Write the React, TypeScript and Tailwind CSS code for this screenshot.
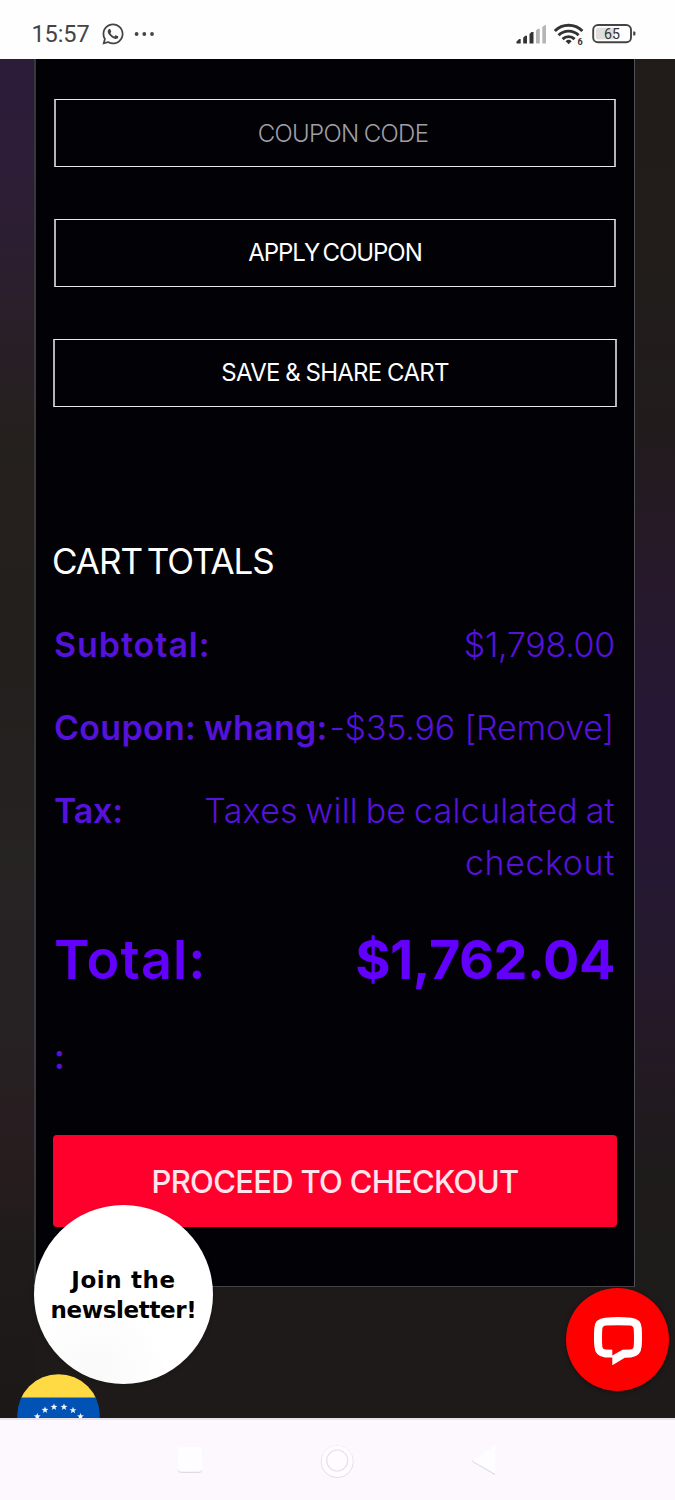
import React from "react";
import { FaWhatsapp } from "react-icons/fa";

function StatusBar() {
  return (
    <header className="flex h-[59px] items-start justify-between bg-[#fefefe] pl-[31.5px] pr-[39px] pt-[22px] text-[#444]">
      <div className="flex h-[25px] items-center">
        <span className="w-[59px] font-['Roboto',sans-serif] text-[23.5px] leading-[25px] tracking-[-0.1px]">15:57</span>
        <FaWhatsapp className="mb-[2px] ml-[10px] size-[24px]" />
        <svg className="ml-[9px] h-[5px] w-[21px]" viewBox="0 0 21 5" fill="#444">
          <circle cx="2.6" cy="2" r="1.9" />
          <circle cx="10.3" cy="2" r="1.9" />
          <circle cx="18" cy="2" r="1.9" />
        </svg>
      </div>
      <svg className="h-[25px] w-[120px]" viewBox="516 22 120 25" fill="none">
        <g fill="#333">
          <path d="M516.500 43.500v-2l2.700-2.500h1.500v4.500z" />
          <path d="M523.200 43.500v-5.700l2-2h1.800v7.700z" />
          <path d="M529.500 43.500v-9.500l2-1.900h2v11.400z" />
        </g>
        <g fill="#b5b5b5">
          <path d="M536 43.500v-13l2-1.700h1.800v14.700z" />
          <path d="M542.300 43.500v-16.300l2-2h1.700v18.300z" />
        </g>
        <g stroke="#333" strokeWidth="2.900">
          <path d="M554.800 31a19.500 19.500 0 0 1 27.600 0" />
          <path d="M558.600 35.200a14.200 14.200 0 0 1 20 0" />
          <path d="M562.600 39.100a8.500 8.500 0 0 1 12 0" />
        </g>
        <path d="M565.600 41.200a4.500 4.500 0 0 1 6 0l-3 3z" fill="#333" />
        <text x="577.500" y="45" fontSize="9" fontWeight="700" fontFamily="Roboto, sans-serif" fill="#333">6</text>
        <rect x="593.200" y="25" width="37.800" height="17.300" rx="4.800" stroke="#444" strokeWidth="1.900" />
        <rect x="596" y="27.800" width="19" height="11.700" rx="2" fill="#dedede" />
        <path d="M633.200 31.500h1.200q1 0 1 1v2q0 1-1 1h-1.200z" fill="#444" />
        <text x="612" y="39.200" textAnchor="middle" fontSize="14.200" fontFamily="Roboto, sans-serif" fill="#333">65</text>
      </svg>
    </header>
  );
}

const outline =
  "flex h-[68px] items-center justify-center border-x-2 border-y border-x-[#b4b4b6] border-y-[#e8e8ea] text-[24px] whitespace-nowrap";

function Row({ label, labelClass, children, valueClass }: { label: string; labelClass: string; children?: React.ReactNode; valueClass?: string }) {
  return (
    <div className="flex justify-between whitespace-nowrap">
      <span className={"font-semibold " + labelClass}>{label}</span>
      <span className={"text-right " + (valueClass ?? "")}>{children}</span>
    </div>
  );
}

function CartPanel() {
  return (
    <main className="ml-[34px] flex h-[1228px] w-[601px] flex-col border-b border-l-2 border-r border-b-[#424145] border-l-[#38373b] border-r-[#515055] bg-[#020106] pl-[17px] pr-[17px] pt-[40px] text-white">
      <div className="mx-px flex flex-col gap-[52px]">
        <input
          aria-label="Coupon code"
          placeholder="COUPON CODE"
          className="h-[68px] border-x-2 border-y border-x-[#b4b4b6] border-y-[#e8e8ea] bg-transparent pl-[16px] text-center text-[24px] font-light tracking-[-0.65px] [word-spacing:-1px] outline-none placeholder:text-[#a09fa5]"
        />
        <button className={outline + " tracking-[-1.05px] [word-spacing:-2.500px]"}>APPLY COUPON</button>
      </div>
      <button className={outline + " mt-[52px] tracking-[-0.72px] [word-spacing:-0.500px]"}>SAVE &amp; SHARE CART</button>

      <h2 className="-ml-px mt-[128px] text-[35px] leading-[52px] tracking-[-1.05px] [word-spacing:-4px]">CART TOTALS</h2>

      <div className="mt-[31.500px] flex flex-col gap-[31px] pl-px pr-[2px] text-[34px] font-light leading-[52px] text-[#5512db]">
        <Row label="Subtotal:" labelClass="tracking-[0.95px]" valueClass="tracking-[-0.3px]">$1,798.00</Row>
        <div className="-mr-px">
          <Row label="Coupon: whang:" labelClass="tracking-[0.3px] [word-spacing:-1px]" valueClass="pr-[2px] tracking-[-0.2px]">
            -$35.96 <a>[Remove]</a>
          </Row>
        </div>
        <Row label="Tax:" labelClass="tracking-[-0.2px]">
          <span className="tracking-[0.25px] [word-spacing:-2.200px]">Taxes will be calculated at</span>
          <br />
          <span className="tracking-[0.6px]">checkout</span>
        </Row>
      </div>
      <div className="mt-[30.500px] flex justify-between pl-px pr-[2px] text-[54px] leading-[82px] text-[#6200fb]">
        <span className="font-semibold tracking-[1.1px]">Total:</span>
        <span className="font-bold tracking-[-0.5px]">$1,762.04</span>
      </div>
      <span className="mt-[30px] pl-px text-[34px] font-semibold leading-[52px] text-[#5512db]">:</span>

      <button className="mt-[52px] h-[92px] shrink-0 rounded-[4px] bg-[#ff002d] pt-[2px] text-[31px] font-medium tracking-[-0.7px] text-[#ffe5ec]">
        PROCEED TO CHECKOUT
      </button>
    </main>
  );
}

const stars = [[20.300, 42.500], [28, 36], [37, 33], [47, 33], [56, 36.300], [63.500, 42.500]];
const star = "M0-3.600 .9-1.150 3.450-1.100 1.400.450 2.150 2.950 0 1.450-2.150 2.950-1.400.450-3.450-1.100-.9-1.150z";

function FlagBadge() {
  return (
    <svg className="absolute bottom-0 left-[17px] h-[44px] w-[83px]" viewBox="0 0 83 44">
      <defs>
        <clipPath id="badge">
          <circle cx="41.500" cy="41.500" r="41.300" />
        </clipPath>
      </defs>
      <g clipPath="url(#badge)">
        <rect width="83" height="24" fill="#ffda44" />
        <rect y="23.500" width="83" height="21" fill="#0052b4" />
        {stars.map(([x, y]) => (
          <path key={x} d={star} fill="#f2f5fb" transform={`translate(${x} ${y})`} />
        ))}
      </g>
    </svg>
  );
}

function NavBar() {
  return (
    <nav className="flex h-[82px] items-center justify-center border-t-2 border-[#e9e3ec] bg-[#fdf7fe]">
      <svg className="mt-[2px] h-[40px] w-[330px]" viewBox="172.500 1441 330 40" fill="none">
        <rect x="177.500" y="1449" width="24" height="24" rx="3.500" fill="#e0dae2" />
        <rect x="177.500" y="1447" width="24" height="24.800" rx="3.500" fill="#fefdff" />
        <circle cx="336.700" cy="1461.700" r="16" stroke="#e3dde6" strokeWidth="1" />
        <circle cx="336.700" cy="1461" r="13.200" stroke="#fefcff" strokeWidth="4.500" />
        <circle cx="336.700" cy="1460.500" r="10.500" stroke="#e6e0e9" strokeWidth="1.200" fill="#fefcff" />
        <path d="M472 1462l22.500 13v-2l-22.500-13z" fill="#ddd7e1" />
        <path d="M472 1461l23-16v29z" fill="#fefdff" />
      </svg>
    </nav>
  );
}

export default function App() {
  return (
    <div className="flex h-[1500px] w-[675px] flex-col overflow-hidden font-['Inter',sans-serif]">
      <StatusBar />
      <div className="relative h-[1359px] overflow-hidden bg-[#1e1a19]">
        <div className="absolute inset-y-0 left-0 w-[35px] bg-[linear-gradient(to_bottom,#2c1b39_0%,#2d1d37_8%,#2a1f2b_18%,#25201e_27%,#231f1d_45%,#262323_60%,#262123_72%,#281c1f_80%,#1f1b1b_88%,#1b1817_100%)]" />
        <div className="absolute inset-y-0 right-0 w-[41px] bg-[linear-gradient(to_bottom,#211c1a_0%,#211d1b_18%,#221b1d_28%,#27192a_38%,#261735_48%,#251833_60%,#241926_72%,#1e1b1b_82%,#1d1a19_100%)]" />
        <div className="relative">
          <CartPanel />
        </div>
        <div className="absolute left-[34px] top-[1146px] flex size-[179px] flex-col items-center justify-center rounded-full bg-[radial-gradient(circle_at_35%_92%,#f9f9f9_0%,#fff_35%)] pt-[2px] text-center font-['DejaVu_Sans',sans-serif] text-[23px] font-bold leading-[29.500px] text-black shadow-[0_1px_4px_rgba(0,0,0,0.2)]">
          <span className="tracking-[0.6px]">Join the</span>
          <span className="tracking-[-0.35px]">newsletter!</span>
        </div>
        <button aria-label="Chat" className="absolute left-[566px] top-[1229px] flex size-[103px] items-center justify-center rounded-full bg-[#ff0000] pt-[2px] shadow-[0_1px_5px_rgba(0,0,0,0.4)]">
          <svg className="h-[48px] w-[48px]" viewBox="0 0 48 48">
            <path
              fillRule="evenodd"
              fill="#fff"
              d="M11 .8Q24-.6 37 .8 47 1.500 47.700 11 48.400 20 47.700 29 47 39.500 37 40.500L30.800 40.700 18.300 48.300V40.600L11 40.400Q1 39.500.3 29-.4 20 .3 11 1 1.500 11 .8ZM12 8.600Q8.600 9 8.300 12 7.700 20 8.300 29.500 8.600 32.300 12 32.600L18.300 32.800V38.600L28.500 32.800 36 32.600Q39.400 32.300 39.700 29.500 40.300 20 39.700 12 39.400 9 36 8.600 24 8 12 8.600Z"
            />
          </svg>
        </button>
        <FlagBadge />
      </div>
      <NavBar />
    </div>
  );
}
